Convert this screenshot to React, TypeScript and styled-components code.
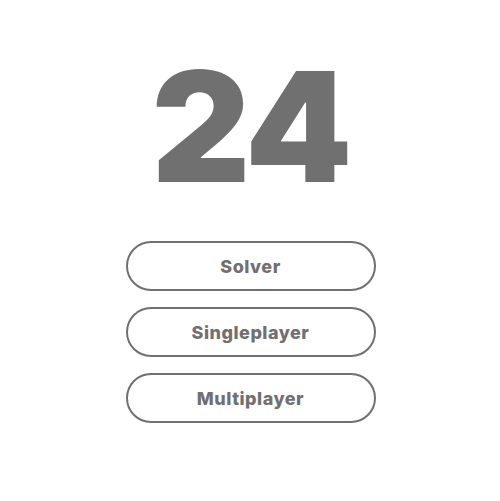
import React from "react";
import styled, { createGlobalStyle } from "styled-components";

const Global = createGlobalStyle`
  html, body { margin: 0; padding: 0; background: #ffffff; }
  body { font-family: Inter, "Liberation Sans", sans-serif; }
`;

const Page = styled.main`
  width: 500px;
  height: 501px;
  padding-left: 1px;
  box-sizing: border-box;
  display: flex;
  flex-direction: column;
  align-items: center;
`;

const Title = styled.h1`
  margin: 39px 0 0 0;
  font-family: Inter, "Liberation Sans", sans-serif;
  font-weight: 900;
  font-size: 153px;
  line-height: 175px;
  letter-spacing: -3px;
  color: #707070;
`;

const Menu = styled.nav`
  margin-top: 27px;
  display: flex;
  flex-direction: column;
  gap: 16px;
`;

const MenuButton = styled.button`
  box-sizing: border-box;
  width: 250px;
  height: 50px;
  border: 2px solid #707070;
  border-radius: 25px;
  background: #ffffff;
  color: #707070;
  font-family: Inter, "Liberation Sans", sans-serif;
  font-weight: 800;
  font-size: 18px;
  letter-spacing: 0.5px;
  cursor: pointer;
`;

export default function App() {
  return (
    <>
      <Global />
      <Page>
        <Title>24</Title>
        <Menu>
          <MenuButton>Solver</MenuButton>
          <MenuButton>Singleplayer</MenuButton>
          <MenuButton>Multiplayer</MenuButton>
        </Menu>
      </Page>
    </>
  );
}
